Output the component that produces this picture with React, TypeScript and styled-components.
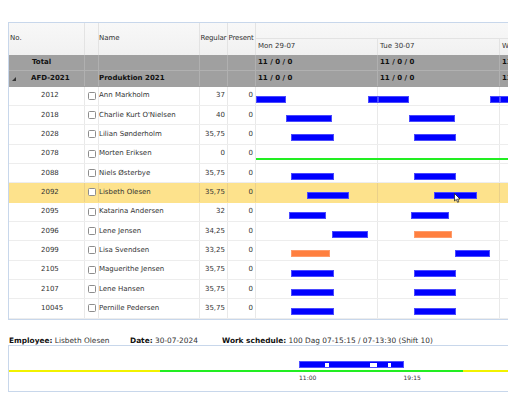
import React from 'react';
import styled, { createGlobalStyle } from 'styled-components';

const Global = createGlobalStyle`
  html, body { margin: 0; padding: 0; background: #fff; overflow: hidden; }
  body { font-family: "DejaVu Sans", Verdana, sans-serif; color: #333; }
`;

const DAY = 122;
const BORDER = '#c8d7eb';

type Kind = 'work' | 'absence';
type BarData = [number, number, Kind?];
type Emp = { no: string; name: string; reg: string; bars?: BarData[]; line?: boolean; selected?: boolean };

const std: BarData[] = [[35, 78], [158, 200]];
const employees: Emp[] = [
  { no: '2012', name: 'Ann Markholm', reg: '37', bars: [[0, 30], [112, 122], [122, 153], [234, 244], [244, 290]] },
  { no: '2018', name: "Charlie Kurt O'Nielsen", reg: '40', bars: [[30, 76], [153, 199]] },
  { no: '2028', name: 'Lilian Sønderholm', reg: '35,75', bars: std },
  { no: '2078', name: 'Morten Eriksen', reg: '0', line: true },
  { no: '2088', name: 'Niels Østerbye', reg: '35,75', bars: std },
  { no: '2092', name: 'Lisbeth Olesen', reg: '35,75', bars: [[51, 93], [178, 221]], selected: true },
  { no: '2095', name: 'Katarina Andersen', reg: '32', bars: [[33, 70], [155, 193]] },
  { no: '2096', name: 'Lene Jensen', reg: '34,25', bars: [[76, 112], [158, 196, 'absence']] },
  { no: '2099', name: 'Lisa Svendsen', reg: '33,25', bars: [[35, 74, 'absence'], [199, 234]] },
  { no: '2105', name: 'Maguerithe Jensen', reg: '35,75', bars: std },
  { no: '2107', name: 'Lene Hansen', reg: '35,75', bars: std },
  { no: '10045', name: 'Pernille Pedersen', reg: '35,75', bars: std },
];

const days = ['Mon 29-07', 'Tue 30-07', 'Wed 31-07', 'Thu 01-08'];

const Page = styled.div`
  padding: 22px 0 0 8px;
  width: 760px;
`;

const Grid = styled.div`
  border-top: 1px solid ${BORDER};
  border-left: 1px solid ${BORDER};
  border-bottom: 1px solid ${BORDER};
  font-size: 7px;
  line-height: 1;
`;

const HeaderRow = styled.div`
  --line: #e3e3e3;
  display: flex;
  height: 31.5px;
  background: linear-gradient(#f8f8f8, #f1f1f1);
  color: #333;
`;

const GroupRow = styled.div<{ $divider?: boolean }>`
  --line: #b0b0b0;
  display: flex;
  box-sizing: border-box;
  height: 16px;
  background: #a0a0a0;
  color: #111;
  font-weight: bold;
  border-bottom: 1px solid ${p => (p.$divider ? '#b1b1b1' : '#a0a0a0')};
`;

const DataRow = styled.div<{ $selected?: boolean }>`
  --line: ${p => (p.$selected ? '#ead08a' : '#e9e9e9')};
  display: flex;
  box-sizing: border-box;
  height: 19.35px;
  border-bottom: 1px solid ${p => (p.$selected ? '#fde28c' : '#ededed')};
  background: ${p => (p.$selected ? '#fde28c' : '#fff')};
`;

const BaseCell = styled.div`
  flex: none;
  box-sizing: border-box;
  display: flex;
  align-items: center;
  border-right: 1px solid var(--line);
  white-space: nowrap;
  overflow: hidden;
`;

const NoCell = styled(BaseCell)<{ $indent: number }>`
  width: 76px;
  padding-left: ${p => p.$indent}px;
`;

const CheckCell = styled(BaseCell)`
  width: 14px;
  justify-content: center;
`;

const NameCell = styled(BaseCell)`
  width: 101px;
  padding-left: 0;
`;

const NumCell = styled(BaseCell)<{ $head?: boolean }>`
  width: 28px;
  justify-content: ${p => (p.$head ? 'flex-start' : 'flex-end')};
  padding: ${p => (p.$head ? '0 0 0 0.5px' : '0 2px 0 0')};
  overflow: ${p => (p.$head ? 'visible' : 'hidden')};
  letter-spacing: ${p => (p.$head ? '-0.15px' : '0')};
`;

const Check = styled.span`
  display: block;
  width: 8px;
  height: 8px;
  box-sizing: border-box;
  border: 1px solid #8d8d8d;
  border-radius: 1.5px;
  background: #fff;
`;

const Toggle = styled.svg`
  position: absolute;
  left: 3px;
  top: 6px;
`;

const GanttCell = styled.div`
  position: relative;
  flex: none;
  display: flex;
  width: ${DAY * 4}px;
`;

const GanttHead = styled.div`
  flex: none;
  width: ${DAY * 4}px;
  display: flex;
  flex-direction: column;
`;

const TopBand = styled.div`
  height: 15px;
  border-bottom: 1px solid #e3e3e3;
`;

const DayHeads = styled.div`
  flex: 1;
  display: flex;
`;

const Day = styled.div`
  flex: none;
  width: ${DAY}px;
  box-sizing: border-box;
  border-right: 1px solid var(--line);
  display: flex;
  align-items: center;
  padding-left: 2px;
  white-space: nowrap;
`;

const Bar = styled.div<{ $kind: Kind }>`
  position: absolute;
  top: 9px;
  height: 7px;
  box-sizing: border-box;
  background: ${p => (p.$kind === 'work' ? '#0000ff' : '#ff7f3f')};
  border: 1px solid ${p => (p.$kind === 'work' ? '#4a4aff' : '#ff9b6a')};
`;

const PlanLine = styled.div`
  position: absolute;
  left: 0;
  right: 0;
  top: 13px;
  height: 2px;
  background: #22ee22;
`;

const Cursor = styled.svg`
  position: absolute;
  left: 198px;
  top: 10px;
`;

const Info = styled.div`
  margin-top: 17px;
  display: flex;
  height: 8px;
  align-items: center;
  font-size: 7.4px;
  line-height: 1;
  color: #333;
  white-space: nowrap;
`;

const Field = styled.span<{ $w?: number }>`
  padding-left: 1px;
  width: ${p => (p.$w ? `${p.$w}px` : 'auto')};
  flex: none;
`;

const Label = styled.b`
  color: #111;
`;

const TimelineBox = styled.div`
  position: relative;
  height: 45px;
  border: 1px solid ${BORDER};
  border-right: none;
`;

const Segment = styled.div<{ $color: string }>`
  position: absolute;
  top: 24px;
  height: 2px;
  background: ${p => p.$color};
`;

const ShiftBar = styled.div`
  position: absolute;
  left: 290px;
  top: 15px;
  width: 105px;
  height: 7px;
  box-sizing: border-box;
  background: #0000ff;
  border: 1px solid #5050ff;
`;

const Break = styled.div`
  position: absolute;
  top: 1.5px;
  height: 3.4px;
  background: #fff;
`;

const TimeLabel = styled.span`
  position: absolute;
  top: 29px;
  font-size: 6px;
  line-height: 1;
  color: #333;
`;

export default function App() {
  return (
    <>
      <Global />
      <Page>
        <Grid>
          <HeaderRow>
            <NoCell $indent={1}>No.</NoCell>
            <CheckCell />
            <NameCell>Name</NameCell>
            <NumCell $head>Regular</NumCell>
            <NumCell $head>Present</NumCell>
            <GanttHead>
              <TopBand />
              <DayHeads>
                {days.map(d => (
                  <Day key={d}>{d}</Day>
                ))}
              </DayHeads>
            </GanttHead>
          </HeaderRow>

          <GroupRow $divider>
            <NoCell $indent={23}>Total</NoCell>
            <CheckCell />
            <NameCell />
            <NumCell />
            <NumCell />
            <GanttCell>
              {days.map(d => (
                <Day key={d}>11 / 0 / 0</Day>
              ))}
            </GanttCell>
          </GroupRow>

          <GroupRow>
            <NoCell $indent={22} style={{ position: 'relative' }}>
              <Toggle width="4" height="4" viewBox="0 0 4 4">
                <path d="M4 0 L4 4 L0 4 Z" fill="#333" />
              </Toggle>
              AFD-2021
            </NoCell>
            <CheckCell />
            <NameCell>Produktion 2021</NameCell>
            <NumCell />
            <NumCell />
            <GanttCell>
              {days.map(d => (
                <Day key={d}>11 / 0 / 0</Day>
              ))}
            </GanttCell>
          </GroupRow>

          {employees.map(e => (
            <DataRow key={e.no} $selected={e.selected}>
              <NoCell $indent={32}>{e.no}</NoCell>
              <CheckCell>
                <Check />
              </CheckCell>
              <NameCell>{e.name}</NameCell>
              <NumCell>{e.reg}</NumCell>
              <NumCell>0</NumCell>
              <GanttCell>
                {days.map(d => (
                  <Day key={d} />
                ))}
                {e.line && <PlanLine />}
                {e.bars?.map(([a, b, k], i) => (
                  <Bar key={i} $kind={k ?? 'work'} style={{ left: a, width: b - a }} />
                ))}
                {e.selected && (
                  <Cursor width="7" height="10" viewBox="0 0 7 10">
                    <path d="M0.5 0.5 L0.5 8 L2.3 6.4 L3.6 9.3 L4.8 8.8 L3.6 6 L6 6 Z" fill="#fff" stroke="#222" strokeWidth="0.8" />
                  </Cursor>
                )}
              </GanttCell>
            </DataRow>
          ))}
        </Grid>

        <Info>
          <Field $w={120}>
            <Label>Employee:</Label> Lisbeth Olesen
          </Field>
          <Field $w={91}>
            <Label>Date:</Label> 30-07-2024
          </Field>
          <Field>
            <Label>Work schedule:</Label> 100 Dag 07-15:15 / 07-13:30 (Shift 10)
          </Field>
        </Info>
        <TimelineBox>
          <Segment $color="#f2f200" style={{ left: 0, width: 151 }} />
          <Segment $color="#22ee22" style={{ left: 151, width: 303 }} />
          <Segment $color="#f2f200" style={{ left: 454, width: 300 }} />
          <ShiftBar>
            <Break style={{ left: 25, width: 4 }} />
            <Break style={{ left: 70, width: 6.6 }} />
            <Break style={{ left: 88, width: 3.4 }} />
          </ShiftBar>
          <TimeLabel style={{ left: 290 }}>11:00</TimeLabel>
          <TimeLabel style={{ left: 394.5 }}>19:15</TimeLabel>
        </TimelineBox>
      </Page>
    </>
  );
}
